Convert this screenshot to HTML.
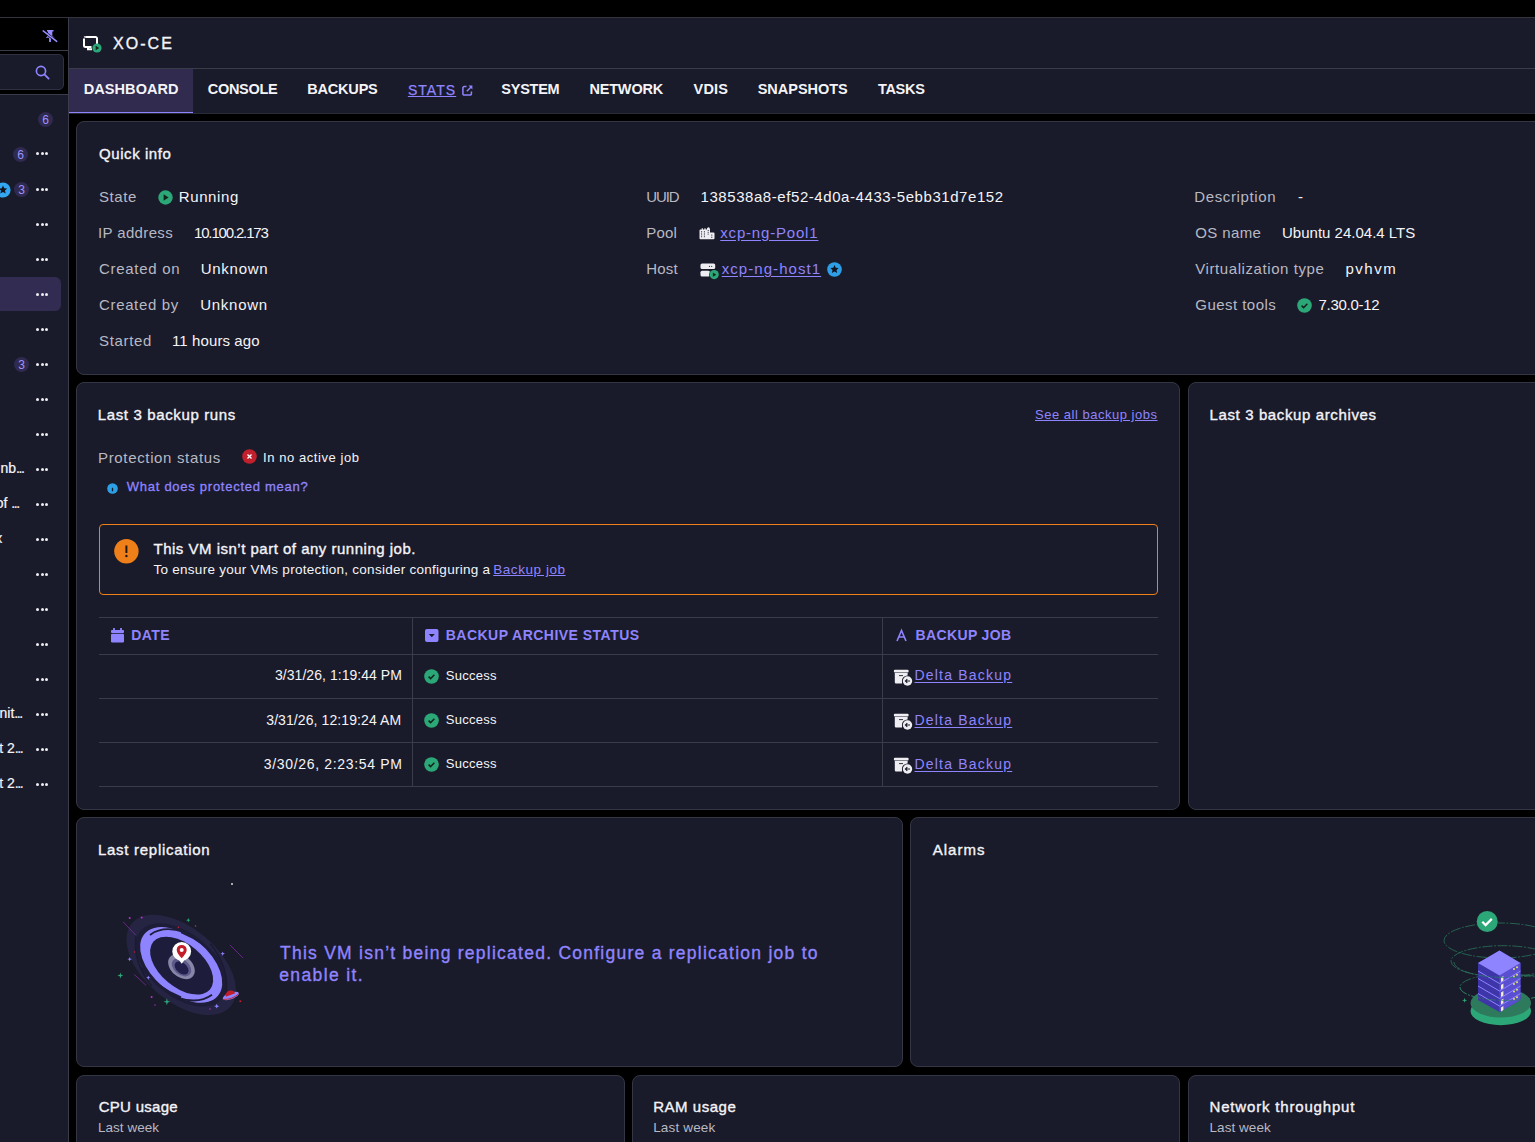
<!DOCTYPE html>
<html><head><meta charset="utf-8">
<style>
html,body{margin:0;padding:0;}
body{width:1535px;height:1142px;overflow:hidden;background:#000;position:relative;font-family:"Liberation Sans",sans-serif;}
.a{position:absolute;box-sizing:border-box;}
.t{position:absolute;white-space:nowrap;}
.card{position:absolute;box-sizing:border-box;background:#1a1b2a;border:1px solid #353645;border-radius:8px;}
.hl{position:absolute;height:1px;background:#3b3c4a;}
.vl{position:absolute;width:1px;background:#3b3c4a;}
svg{position:absolute;overflow:visible;}
.badge{position:absolute;width:15px;height:15px;border-radius:50%;background:#2f2a4f;color:#9d93ff;font-size:12px;line-height:16.5px;text-align:center;}
.dots{position:absolute;width:13px;height:3px;}
.dots i{position:absolute;top:0;width:3px;height:3px;border-radius:50%;background:#eeeef2;}
</style></head><body>
<!-- top border -->
<div class="hl" style="left:0;top:17px;width:1535px;background:#34343f"></div>
<!-- sidebar -->
<div class="a" style="left:0;top:18px;width:68px;height:1124px;background:#1a1b2a"></div>
<div class="a" style="left:0;top:18px;width:68px;height:32px;background:#000"></div>
<div class="hl" style="left:0;top:50px;width:68px"></div>
<div class="a" style="left:0;top:51px;width:68px;height:43px;background:#000"></div>
<div class="a" style="left:-20px;top:54px;width:84px;height:36px;background:#1a1b2a;border:1px solid #2f3040;border-radius:5px"></div>
<div class="hl" style="left:0;top:94px;width:68px"></div>
<div class="vl" style="left:68px;top:18px;height:1124px"></div>
<div class="a" style="left:-10px;top:277px;width:71px;height:34px;background:#322c52;border-radius:6px"></div>
<!-- pin icon -->
<svg style="left:40px;top:26px" width="20" height="18" viewBox="40 26 20 18">
  <path d="M47 30h6.5v1.6h-1.2v4.2l2.3 2h-8.9l2.3-2v-4.2H47z" fill="#968cff"/>
  <path d="M49.1 37.5h1.8v4.4h-1.8z" fill="#968cff"/>
  <path d="M42.5 30.3L57.3 41.9" stroke="#000" stroke-width="2.6"/>
  <path d="M43.2 30.9L56.7 41.4" stroke="#968cff" stroke-width="1.5" stroke-linecap="round"/>
</svg>
<!-- search icon -->
<svg style="left:35px;top:65px" width="15" height="15" viewBox="0 0 15 15">
  <circle cx="6" cy="6" r="4.6" fill="none" stroke="#8f84ff" stroke-width="1.6"/>
  <path d="M9.4 9.4l4.2 4.2" stroke="#8f84ff" stroke-width="1.8" stroke-linecap="round"/>
</svg>
<!-- sidebar badges -->
<div class="badge" style="left:38px;top:111.5px">6</div>
<div class="badge" style="left:13px;top:146.5px">6</div>
<div class="badge" style="left:14px;top:181.5px">3</div>
<div class="badge" style="left:14px;top:357px">3</div>
<svg style="left:-5px;top:181.5px" width="16" height="16" viewBox="0 0 16 16">
  <circle cx="8" cy="8" r="7.6" fill="#33a6f2"/>
  <path d="M8 3.6l1.25 2.7 2.9.3-2.15 2 .6 2.9L8 10.05 5.4 11.5l.6-2.9-2.15-2 2.9-.3z" fill="#14141e"/>
</svg>
<div class="dots" style="left:36px;top:151.5px"><i style="left:0"></i><i style="left:4.5px"></i><i style="left:9px"></i></div>
<div class="dots" style="left:36px;top:187.5px"><i style="left:0"></i><i style="left:4.5px"></i><i style="left:9px"></i></div>
<div class="dots" style="left:36px;top:222.5px"><i style="left:0"></i><i style="left:4.5px"></i><i style="left:9px"></i></div>
<div class="dots" style="left:36px;top:257.5px"><i style="left:0"></i><i style="left:4.5px"></i><i style="left:9px"></i></div>
<div class="dots" style="left:36px;top:292.5px"><i style="left:0"></i><i style="left:4.5px"></i><i style="left:9px"></i></div>
<div class="dots" style="left:36px;top:327.5px"><i style="left:0"></i><i style="left:4.5px"></i><i style="left:9px"></i></div>
<div class="dots" style="left:36px;top:362.5px"><i style="left:0"></i><i style="left:4.5px"></i><i style="left:9px"></i></div>
<div class="dots" style="left:36px;top:397.5px"><i style="left:0"></i><i style="left:4.5px"></i><i style="left:9px"></i></div>
<div class="dots" style="left:36px;top:432.5px"><i style="left:0"></i><i style="left:4.5px"></i><i style="left:9px"></i></div>
<div class="dots" style="left:36px;top:467.5px"><i style="left:0"></i><i style="left:4.5px"></i><i style="left:9px"></i></div>
<div class="dots" style="left:36px;top:502.5px"><i style="left:0"></i><i style="left:4.5px"></i><i style="left:9px"></i></div>
<div class="dots" style="left:36px;top:537.5px"><i style="left:0"></i><i style="left:4.5px"></i><i style="left:9px"></i></div>
<div class="dots" style="left:36px;top:572.5px"><i style="left:0"></i><i style="left:4.5px"></i><i style="left:9px"></i></div>
<div class="dots" style="left:36px;top:607.5px"><i style="left:0"></i><i style="left:4.5px"></i><i style="left:9px"></i></div>
<div class="dots" style="left:36px;top:642.5px"><i style="left:0"></i><i style="left:4.5px"></i><i style="left:9px"></i></div>
<div class="dots" style="left:36px;top:677.5px"><i style="left:0"></i><i style="left:4.5px"></i><i style="left:9px"></i></div>
<div class="dots" style="left:36px;top:712.5px"><i style="left:0"></i><i style="left:4.5px"></i><i style="left:9px"></i></div>
<div class="dots" style="left:36px;top:747.5px"><i style="left:0"></i><i style="left:4.5px"></i><i style="left:9px"></i></div>
<div class="dots" style="left:36px;top:782.5px"><i style="left:0"></i><i style="left:4.5px"></i><i style="left:9px"></i></div>
<!-- header -->
<div class="a" style="left:69px;top:18px;width:1466px;height:50px;background:#1a1b2a"></div>
<div class="hl" style="left:69px;top:68px;width:1466px"></div>
<svg style="left:83px;top:36px" width="19" height="17" viewBox="0 0 19 17">
  <path d="M2.5 1h10a1.5 1.5 0 0 1 1.5 1.5v5.5" fill="none" stroke="#fff" stroke-width="2"/>
  <path d="M1 2.5v7a1.5 1.5 0 0 0 1.5 1.5h6" fill="none" stroke="#fff" stroke-width="2"/>
  <path d="M1.5 1.5a1.2 1.2 0 0 1 1-.5" stroke="#fff" stroke-width="2"/>
  <path d="M5 11v2.3h4" fill="none" stroke="#fff" stroke-width="2"/>
  <circle cx="14" cy="12" r="4.6" fill="#2ca878"/>
  <path d="M12.7 9.8v4.4l3.5-2.2z" fill="#15261f"/>
</svg>
<!-- tabs -->
<div class="a" style="left:69px;top:69px;width:1466px;height:44px;background:#1a1b2a"></div>
<div class="a" style="left:69px;top:69px;width:124px;height:43px;background:#312b50"></div>
<div class="a" style="left:69px;top:112px;width:124px;height:1px;background:#8f84ff"></div>
<div class="hl" style="left:69px;top:113px;width:1466px;background:#2b2b36"></div>
<svg style="left:462px;top:85px" width="11" height="11" viewBox="0 0 11 11">
  <path d="M4.5 1.6H2.1A1.2 1.2 0 0 0 0.9 2.8v6.1A1.2 1.2 0 0 0 2.1 10.1h6.1A1.2 1.2 0 0 0 9.4 8.9V6.5" fill="none" stroke="#8f84ff" stroke-width="1.5"/>
  <path d="M6.5 0.6h3.9v3.9z" fill="#8f84ff"/><path d="M9.6 1.4L4.8 6.2" fill="none" stroke="#8f84ff" stroke-width="1.4"/>
</svg>

<!-- cards -->
<div class="card" style="left:76px;top:121px;width:1500px;height:254px"></div>
<div class="card" style="left:76px;top:382px;width:1104px;height:428px"></div>
<div class="card" style="left:1188px;top:382px;width:500px;height:428px"></div>
<div class="card" style="left:76px;top:817px;width:827px;height:250px"></div>
<div class="card" style="left:910px;top:817px;width:700px;height:250px"></div>
<div class="card" style="left:76px;top:1075px;width:549px;height:120px"></div>
<div class="card" style="left:632px;top:1075px;width:548px;height:120px"></div>
<div class="card" style="left:1188px;top:1075px;width:500px;height:120px"></div>

<!-- quick info icons -->
<svg style="left:157.5px;top:190px" width="15" height="15" viewBox="0 0 15 15">
  <circle cx="7.5" cy="7.5" r="7.2" fill="#2ca878"/>
  <path d="M5.6 4.3v6.4l5-3.2z" fill="#13241d"/>
</svg>
<svg style="left:698.5px;top:226.5px" width="16" height="13" viewBox="0 0 16 13">
  <path d="M0.5 3.5q0-1 1-1h1.2v-1.2h1.2v1.2h1.5v-1.2h1.2v1.2h1.2q0-2 1.5-2.2q1.7 0 1.7 2.2v3h3.5q1 0 1 1v4.8q0 1-1 1H1.5q-1 0-1-1z" fill="#eeeef2"/>
  <g stroke="#1a1b2a" stroke-width="0.9" stroke-dasharray="1.2 1">
   <path d="M2.6 4.2v6.8M5.4 4.2v6.8M9.2 3v5"/><path d="M12.8 7.5v3.6"/>
  </g>
</svg>
<svg style="left:699.5px;top:262.5px" width="20" height="17" viewBox="0 0 20 17">
  <rect x="0.5" y="0.5" width="14.7" height="5.5" rx="1.6" fill="#eeeef2"/>
  <rect x="0.5" y="7.7" width="9.5" height="5.8" rx="1.6" fill="#eeeef2"/>
  <circle cx="9.5" cy="3.3" r=".6" fill="#1a1b2a"/><circle cx="11.7" cy="3.3" r=".6" fill="#1a1b2a"/>
  <circle cx="14.2" cy="11.6" r="5.1" fill="#1a1b2a"/>
  <circle cx="14.2" cy="11.6" r="4.6" fill="#2ca878"/>
  <path d="M12.9 9.5v4.3l3.4-2.15z" fill="#13241d"/>
</svg>
<svg style="left:826.5px;top:261.75px" width="15" height="15" viewBox="0 0 15 15">
  <circle cx="7.5" cy="7.5" r="7.3" fill="#2c9fe7"/>
  <path d="M7.5 3.1l1.25 2.7 2.9.3-2.15 2 .6 2.9L7.5 9.55 4.9 11l.6-2.9-2.15-2 2.9-.3z" fill="#14141e"/>
</svg>
<svg style="left:1296.5px;top:297.5px" width="15" height="15" viewBox="0 0 15 15">
  <circle cx="7.5" cy="7.5" r="7.3" fill="#2ca878"/>
  <path d="M4.6 7.6l2 2 3.8-3.9" fill="none" stroke="#13241d" stroke-width="1.5"/>
</svg>
<!-- backup runs icons -->
<svg style="left:241.75px;top:448.75px" width="15" height="15" viewBox="0 0 15 15">
  <circle cx="7.5" cy="7.5" r="7.3" fill="#c0212c"/>
  <path d="M5.5 5.5l4 4M9.5 5.5l-4 4" stroke="#fff" stroke-width="1.3"/>
</svg>
<svg style="left:106.75px;top:482.75px" width="11" height="11" viewBox="0 0 11 11">
  <circle cx="5.5" cy="5.5" r="5.3" fill="#2c9fe7"/>
  <path d="M5.5 4.8v3.5" stroke="#13202c" stroke-width="1.3"/>
</svg>
<div class="a" style="left:99px;top:524px;width:1059px;height:71px;border:1px solid #ef7f18;border-radius:4px"></div>
<svg style="left:113.75px;top:538.75px" width="25" height="25" viewBox="0 0 25 25">
  <circle cx="12.4" cy="12.25" r="12.2" fill="#ef7f18"/>
  <path d="M12.4 6.5v7.5" stroke="#23180e" stroke-width="2"/>
  <circle cx="12.4" cy="17" r="1.2" fill="#23180e"/>
</svg>
<!-- table -->
<div class="hl" style="left:99px;top:617px;width:1059px"></div>
<div class="hl" style="left:99px;top:654px;width:1059px"></div>
<div class="hl" style="left:99px;top:698px;width:1059px"></div>
<div class="hl" style="left:99px;top:742px;width:1059px"></div>
<div class="hl" style="left:99px;top:786px;width:1059px"></div>
<div class="vl" style="left:412px;top:617px;height:170px"></div>
<div class="vl" style="left:882px;top:617px;height:170px"></div>
<svg style="left:110.75px;top:628px" width="13" height="15" viewBox="0 0 13 15">
  <path d="M3 0v2.5M10 0v2.5" stroke="#8f84ff" stroke-width="1.8"/>
  <rect x="0" y="2" width="13" height="3" rx="1" fill="#8f84ff"/>
  <rect x="0" y="5.8" width="13" height="8.7" rx="1.2" fill="#8f84ff"/>
</svg>
<svg style="left:424.5px;top:628.75px" width="14" height="13" viewBox="0 0 14 13">
  <rect x="0" y="0" width="13.5" height="13" rx="2" fill="#8f84ff"/>
  <path d="M3.8 5h6l-3 3.2z" fill="#1a1b2a"/>
</svg>
<svg style="left:895.75px;top:630px" width="12" height="11" viewBox="0 0 12 11">
  <path d="M1 11L5.5 0.5 10 11M2.7 7h5.6" fill="none" stroke="#8f84ff" stroke-width="1.6"/>
</svg>
<svg style="left:423.75px;top:668.75px" width="15" height="15" viewBox="0 0 15 15">
  <circle cx="7.5" cy="7.5" r="7.3" fill="#2ca878"/>
  <path d="M4.6 7.6l2 2 3.8-3.9" fill="none" stroke="#13241d" stroke-width="1.5"/>
</svg>
<svg style="left:423.75px;top:712.75px" width="15" height="15" viewBox="0 0 15 15">
  <circle cx="7.5" cy="7.5" r="7.3" fill="#2ca878"/>
  <path d="M4.6 7.6l2 2 3.8-3.9" fill="none" stroke="#13241d" stroke-width="1.5"/>
</svg>
<svg style="left:423.75px;top:756.75px" width="15" height="15" viewBox="0 0 15 15">
  <circle cx="7.5" cy="7.5" r="7.3" fill="#2ca878"/>
  <path d="M4.6 7.6l2 2 3.8-3.9" fill="none" stroke="#13241d" stroke-width="1.5"/>
</svg>
<svg style="left:0;top:-44px" width="1535" height="1142" viewBox="0 0 1535 1142">
  <rect x="893.9" y="713.7" width="14.7" height="2.8" rx="1" fill="#eeeef2"/>
  <path d="M894.8 716.9h12.8v3.5a5.8 5.8 0 0 0-5.5 7.1h-6.1a1.2 1.2 0 0 1-1.2-1.2z" fill="#eeeef2"/>
  <path d="M899 719.6h4" stroke="#1a1b2a" stroke-width="0.9"/>
  <circle cx="907.5" cy="725" r="5.6" fill="#1a1b2a"/>
  <circle cx="907.5" cy="725" r="4.7" fill="#eeeef2"/>
  <path d="M910 725h-4.6M907.3 723.2l-1.9 1.8 1.9 1.8" fill="none" stroke="#1a1b2a" stroke-width="1.1"/>
</svg>
<svg style="left:0;top:0px" width="1535" height="1142" viewBox="0 0 1535 1142">
  <rect x="893.9" y="713.7" width="14.7" height="2.8" rx="1" fill="#eeeef2"/>
  <path d="M894.8 716.9h12.8v3.5a5.8 5.8 0 0 0-5.5 7.1h-6.1a1.2 1.2 0 0 1-1.2-1.2z" fill="#eeeef2"/>
  <path d="M899 719.6h4" stroke="#1a1b2a" stroke-width="0.9"/>
  <circle cx="907.5" cy="725" r="5.6" fill="#1a1b2a"/>
  <circle cx="907.5" cy="725" r="4.7" fill="#eeeef2"/>
  <path d="M910 725h-4.6M907.3 723.2l-1.9 1.8 1.9 1.8" fill="none" stroke="#1a1b2a" stroke-width="1.1"/>
</svg>
<svg style="left:0;top:44px" width="1535" height="1142" viewBox="0 0 1535 1142">
  <rect x="893.9" y="713.7" width="14.7" height="2.8" rx="1" fill="#eeeef2"/>
  <path d="M894.8 716.9h12.8v3.5a5.8 5.8 0 0 0-5.5 7.1h-6.1a1.2 1.2 0 0 1-1.2-1.2z" fill="#eeeef2"/>
  <path d="M899 719.6h4" stroke="#1a1b2a" stroke-width="0.9"/>
  <circle cx="907.5" cy="725" r="5.6" fill="#1a1b2a"/>
  <circle cx="907.5" cy="725" r="4.7" fill="#eeeef2"/>
  <path d="M910 725h-4.6M907.3 723.2l-1.9 1.8 1.9 1.8" fill="none" stroke="#1a1b2a" stroke-width="1.1"/>
</svg>
<!-- illustrations -->
<svg style="left:0;top:0" width="1535" height="1142" viewBox="0 0 1535 1142">
 <g transform="rotate(40 181.2 964.9)">
  <ellipse cx="181.2" cy="964.9" rx="64.5" ry="36.8" fill="#262443"/>
  <ellipse cx="181.2" cy="964.9" rx="53" ry="31.5" fill="#1e1d37"/>
  <ellipse cx="181.2" cy="964.9" rx="48" ry="28.5" fill="#8f84ff"/>
  <ellipse cx="182" cy="965.2" rx="37" ry="21.5" fill="#1d1c3a"/>
  <path d="M160 940 q25 -8 50 -3" fill="none" stroke="#1d1c3a" stroke-width="2"/>
  <path d="M202 990 q-25 8 -50 3" fill="none" stroke="#1d1c3a" stroke-width="2"/>
  <path d="M138 962 q4 -16 24 -24" fill="none" stroke="#1d1c3a" stroke-width="1.8"/>
  <path d="M224 968 q-4 16 -24 24" fill="none" stroke="#1d1c3a" stroke-width="1.8"/>
  <path d="M128 972 q14 22 44 28" fill="none" stroke="#1a1a30" stroke-width="1.5"/>
  <path d="M234 958 q-14 -22 -44 -28" fill="none" stroke="#1a1a30" stroke-width="1.5"/>
  <ellipse cx="182.5" cy="966" rx="15" ry="10.5" fill="#8886a8"/>
  <ellipse cx="183" cy="966.5" rx="11" ry="7.5" fill="#5d5a8a"/>
  <ellipse cx="183.5" cy="967" rx="8" ry="5.2" fill="#221f4c"/>
 </g>
 <path d="M181.7 963.8 l-4 -5.5 h8z" fill="#fff"/>
 <circle cx="181.7" cy="951.4" r="9.4" fill="#fff"/>
 <path d="M181.7 958.2 c-2.5 -3 -5 -5.5 -5 -8.3 a5 5 0 0 1 10 0 c0 2.8 -2.5 5.3 -5 8.3z" fill="#c41d2a"/>
 <circle cx="181.7" cy="950" r="2" fill="#fff"/>
 <g transform="rotate(-20 230.5 995)">
  <ellipse cx="230.5" cy="996" rx="8.5" ry="3.3" fill="#8f84ff"/>
  <path d="M225.5 995 a5 4.5 0 0 1 10 0z" fill="#c41d2a"/>
  <path d="M222.5 996.8 q8 3 16 0" fill="none" stroke="#c41d2a" stroke-width="0.8"/>
 </g>
 <g fill="#2ca878">
  <path d="M120.4 972.5l.7 2.3 2.3.7-2.3.7-.7 2.3-.7-2.3-2.3-.7 2.3-.7z"/>
  <path d="M166.9 998.3l.8 2.7 2.7.8-2.7.8-.8 2.7-.8-2.7-2.7-.8 2.7-.8z"/>
  <path d="M188.3 918l.6 1.6 1.6.6-1.6.6-.6 1.6-.6-1.6-1.6-.6 1.6-.6z"/>
 </g>
 <g fill="#8f84ff">
  <path d="M148.3 975.5l.6 1.6 1.6.6-1.6.6-.6 1.6-.6-1.6-1.6-.6 1.6-.6z"/>
  <path d="M129.7 957l.6 1.6 1.6.6-1.6.6-.6 1.6-.6-1.6-1.6-.6 1.6-.6z"/>
  <path d="M222.7 951.5l.6 1.6 1.6.6-1.6.6-.6 1.6-.6-1.6-1.6-.6 1.6-.6z"/>
  <path d="M216.7 1003.8l.7 1.7 1.7.7-1.7.7-.7 1.7-.7-1.7-1.7-.7 1.7-.7z"/>
 </g>
 <g fill="#c02bd6">
  <circle cx="141.7" cy="917.5" r="1"/><circle cx="129.7" cy="918" r="1"/><circle cx="151.6" cy="996.9" r="1"/>
  <circle cx="195.5" cy="926" r=".7"/><circle cx="155" cy="1005" r=".7"/><circle cx="210" cy="1009" r=".7"/>
 </g>
 <g fill="#c41d2a"><circle cx="240.3" cy="1001.2" r="1"/><circle cx="178.4" cy="927.4" r=".8"/><circle cx="134.6" cy="952" r=".8"/></g>
 <g stroke="#7a2a9a" stroke-width=".8">
  <path d="M123.1 921.9L135.7 935M229.9 944.9L243 958M134.1 974.4L146.1 985.4"/>
 </g>
 <circle cx="232" cy="884" r="1" fill="#ddd"/>
</svg>
<svg style="left:0;top:0" width="1535" height="1142" viewBox="0 0 1535 1142">
 <g fill="none" stroke="#2a7f5f" stroke-width=".7" stroke-dasharray="10 1.5 2 1.5">
  <ellipse cx="1500" cy="940.5" rx="56" ry="17.5"/>
  <ellipse cx="1503" cy="961.2" rx="52" ry="15.5"/>
  <ellipse cx="1506" cy="987.2" rx="46" ry="13.2"/>
 </g>
 <ellipse cx="1500.8" cy="1011" rx="30.3" ry="14.2" fill="#2ca878"/>
 <ellipse cx="1500.8" cy="1003" rx="30.3" ry="14.5" fill="#2e7a5c"/>
 <g>
  <path d="M1478 963 l21.5 -12.5 l21 12.5 v37 l-21 12 l-21.5 -12z" fill="#3d35a8"/>
  <path d="M1499.5 975.5 l21 -12.5 v37 l-21 12z" fill="#5a4fd0"/>
  <path d="M1478 963 l21.5 -12.5 l21 12.5 l-21 12.5z" fill="#8f84ff"/>
  <g stroke="#8f84ff" stroke-width="1" fill="none">
   <path d="M1478 971 l21.5 12.5 l21 -12.5M1478 978.5 l21.5 12.5 l21 -12.5M1478 986 l21.5 12.5 l21 -12.5M1478 993.5 l21.5 12.5 l21 -12.5"/>
  </g>
  <g fill="#f3ecd0">
   <path d="M1501 977.5v4.5l2.4 -1.4v-4.5z"/><path d="M1501 985v4.5l2.4 -1.4v-4.5z"/><path d="M1501 992.5v4.5l2.4 -1.4v-4.5z"/><path d="M1501 1000v4.5l2.4 -1.4v-4.5z"/><path d="M1501 1007.5v4l2.4 -1.4v-4z"/>
  </g>
  <g fill="#e8e070">
   <circle cx="1514" cy="969" r="1"/><circle cx="1517" cy="967.3" r="1"/>
   <circle cx="1514" cy="976.5" r="1"/><circle cx="1517" cy="974.8" r="1"/>
   <circle cx="1514" cy="984" r="1"/><circle cx="1517" cy="982.3" r="1"/>
   <circle cx="1514" cy="991.5" r="1"/><circle cx="1517" cy="989.8" r="1"/>
   <circle cx="1514" cy="999" r="1"/><circle cx="1517" cy="997.3" r="1"/>
  </g>
 </g>
 <g fill="none" stroke="#2a7f5f" stroke-width=".7" stroke-dasharray="10 1.5 2 1.5">
  <path d="M1454 962 a52 15.5 0 0 0 104 0"/>
  <path d="M1460 987.2 a46 13.2 0 0 0 92 0"/>
 </g>
 <circle cx="1487.2" cy="921.5" r="10.5" fill="#2ca878"/>
 <path d="M1482.3 921.8l3.3 3.3 6.2 -6.2" fill="none" stroke="#fff" stroke-width="2.2"/>
 <path d="M1464.6 997.8l.6 1.9 1.9.6-1.9.6-.6 1.9-.6-1.9-1.9-.6 1.9-.6z" fill="#2ca878"/>
</svg>
<div class="t" style="left:113.00px;top:36.00px;font-size:16px;line-height:16px;font-weight:normal;color:#f4f4f8;letter-spacing:2.050px;-webkit-text-stroke:0.35px #f4f4f8;">XO-CE</div>
<div class="t" style="left:83.75px;top:82.00px;font-size:14.5px;line-height:14.5px;font-weight:bold;color:#f4f4f8;letter-spacing:0.071px;">DASHBOARD</div>
<div class="t" style="left:207.70px;top:82.00px;font-size:14.5px;line-height:14.5px;font-weight:bold;color:#f4f4f8;letter-spacing:-0.271px;">CONSOLE</div>
<div class="t" style="left:307.30px;top:82.00px;font-size:14.5px;line-height:14.5px;font-weight:bold;color:#f4f4f8;letter-spacing:-0.205px;">BACKUPS</div>
<div class="t" style="left:407.90px;top:83.00px;font-size:14px;line-height:14px;font-weight:normal;color:#8f84ff;letter-spacing:1.050px;text-decoration:underline;text-underline-offset:0.5px;-webkit-text-stroke:0.25px #8f84ff;">STATS</div>
<div class="t" style="left:501.30px;top:82.00px;font-size:14.5px;line-height:14.5px;font-weight:bold;color:#f4f4f8;letter-spacing:-0.249px;">SYSTEM</div>
<div class="t" style="left:589.40px;top:82.00px;font-size:14.5px;line-height:14.5px;font-weight:bold;color:#f4f4f8;letter-spacing:-0.173px;">NETWORK</div>
<div class="t" style="left:693.50px;top:82.00px;font-size:14.5px;line-height:14.5px;font-weight:bold;color:#f4f4f8;letter-spacing:0.210px;">VDIS</div>
<div class="t" style="left:757.70px;top:82.00px;font-size:14.5px;line-height:14.5px;font-weight:bold;color:#f4f4f8;letter-spacing:-0.021px;">SNAPSHOTS</div>
<div class="t" style="left:877.90px;top:82.00px;font-size:14.5px;line-height:14.5px;font-weight:bold;color:#f4f4f8;letter-spacing:-0.274px;">TASKS</div>
<div class="t" style="left:99.00px;top:146.00px;font-size:15px;line-height:15px;font-weight:normal;color:#f4f4f8;letter-spacing:0.572px;-webkit-text-stroke:0.35px #f4f4f8;">Quick info</div>
<div class="t" style="left:99.00px;top:189.00px;font-size:15px;line-height:15px;font-weight:normal;color:#b8b8c3;letter-spacing:0.579px;">State</div>
<div class="t" style="left:178.75px;top:189.00px;font-size:15px;line-height:15px;font-weight:normal;color:#f4f4f8;letter-spacing:0.619px;">Running</div>
<div class="t" style="left:98.00px;top:225.00px;font-size:15px;line-height:15px;font-weight:normal;color:#b8b8c3;letter-spacing:0.366px;">IP address</div>
<div class="t" style="left:194.00px;top:225.00px;font-size:15px;line-height:15px;font-weight:normal;color:#f4f4f8;letter-spacing:-1.158px;">10.100.2.173</div>
<div class="t" style="left:99.00px;top:261.00px;font-size:15px;line-height:15px;font-weight:normal;color:#b8b8c3;letter-spacing:0.708px;">Created on</div>
<div class="t" style="left:200.75px;top:261.00px;font-size:15px;line-height:15px;font-weight:normal;color:#f4f4f8;letter-spacing:0.718px;">Unknown</div>
<div class="t" style="left:99.00px;top:297.00px;font-size:15px;line-height:15px;font-weight:normal;color:#b8b8c3;letter-spacing:0.653px;">Created by</div>
<div class="t" style="left:200.25px;top:297.00px;font-size:15px;line-height:15px;font-weight:normal;color:#f4f4f8;letter-spacing:0.718px;">Unknown</div>
<div class="t" style="left:99.00px;top:333.00px;font-size:15px;line-height:15px;font-weight:normal;color:#b8b8c3;letter-spacing:0.663px;">Started</div>
<div class="t" style="left:172.00px;top:333.00px;font-size:15px;line-height:15px;font-weight:normal;color:#f4f4f8;letter-spacing:0.103px;">11 hours ago</div>
<div class="t" style="left:646.25px;top:189.00px;font-size:15px;line-height:15px;font-weight:normal;color:#b8b8c3;letter-spacing:-1.111px;">UUID</div>
<div class="t" style="left:700.50px;top:189.00px;font-size:15px;line-height:15px;font-weight:normal;color:#f4f4f8;letter-spacing:0.567px;">138538a8-ef52-4d0a-4433-5ebb31d7e152</div>
<div class="t" style="left:646.25px;top:225.00px;font-size:15px;line-height:15px;font-weight:normal;color:#b8b8c3;letter-spacing:0.187px;">Pool</div>
<div class="t" style="left:720.25px;top:225.00px;font-size:15px;line-height:15px;font-weight:normal;color:#8f84ff;letter-spacing:0.815px;text-decoration:underline;text-underline-offset:1.5px;">xcp-ng-Pool1</div>
<div class="t" style="left:646.25px;top:261.00px;font-size:15px;line-height:15px;font-weight:normal;color:#b8b8c3;letter-spacing:0.192px;">Host</div>
<div class="t" style="left:721.75px;top:261.00px;font-size:15px;line-height:15px;font-weight:normal;color:#8f84ff;letter-spacing:1.057px;text-decoration:underline;text-underline-offset:1.5px;">xcp-ng-host1</div>
<div class="t" style="left:1194.25px;top:189.00px;font-size:15px;line-height:15px;font-weight:normal;color:#b8b8c3;letter-spacing:0.631px;">Description</div>
<div class="t" style="left:1298.00px;top:189.00px;font-size:15px;line-height:15px;font-weight:normal;color:#f4f4f8;letter-spacing:0.000px;">-</div>
<div class="t" style="left:1195.25px;top:225.00px;font-size:15px;line-height:15px;font-weight:normal;color:#b8b8c3;letter-spacing:0.372px;">OS name</div>
<div class="t" style="left:1282.00px;top:225.00px;font-size:15px;line-height:15px;font-weight:normal;color:#f4f4f8;letter-spacing:0.006px;">Ubuntu 24.04.4 LTS</div>
<div class="t" style="left:1195.25px;top:261.00px;font-size:15px;line-height:15px;font-weight:normal;color:#b8b8c3;letter-spacing:0.582px;">Virtualization type</div>
<div class="t" style="left:1345.50px;top:261.00px;font-size:15px;line-height:15px;font-weight:normal;color:#f4f4f8;letter-spacing:1.516px;">pvhvm</div>
<div class="t" style="left:1195.25px;top:297.00px;font-size:15px;line-height:15px;font-weight:normal;color:#b8b8c3;letter-spacing:0.463px;">Guest tools</div>
<div class="t" style="left:1318.50px;top:297.00px;font-size:15px;line-height:15px;font-weight:normal;color:#f4f4f8;letter-spacing:-0.286px;">7.30.0-12</div>
<div class="t" style="left:97.75px;top:407.00px;font-size:15px;line-height:15px;font-weight:normal;color:#f4f4f8;letter-spacing:0.633px;-webkit-text-stroke:0.35px #f4f4f8;">Last 3 backup runs</div>
<div class="t" style="left:1035.00px;top:408.00px;font-size:13px;line-height:13px;font-weight:normal;color:#8f84ff;letter-spacing:0.514px;text-decoration:underline;text-underline-offset:1px;">See all backup jobs</div>
<div class="t" style="left:98.00px;top:450.00px;font-size:15px;line-height:15px;font-weight:normal;color:#b8b8c3;letter-spacing:0.658px;">Protection status</div>
<div class="t" style="left:263.00px;top:451.00px;font-size:13px;line-height:13px;font-weight:normal;color:#f4f4f8;letter-spacing:0.569px;">In no active job</div>
<div class="t" style="left:126.75px;top:480.00px;font-size:13px;line-height:13px;font-weight:normal;color:#8f84ff;letter-spacing:0.736px;-webkit-text-stroke:0.3px #8f84ff;">What does protected mean?</div>
<div class="t" style="left:153.50px;top:541.00px;font-size:15px;line-height:15px;font-weight:normal;color:#f4f4f8;letter-spacing:0.499px;-webkit-text-stroke:0.35px #f4f4f8;">This VM isn’t part of any running job.</div>
<div class="t" style="left:153.50px;top:563.00px;font-size:13.5px;line-height:13.5px;font-weight:normal;color:#f4f4f8;letter-spacing:0.266px;">To ensure your VMs protection, consider configuring a</div>
<div class="t" style="left:493.25px;top:563.00px;font-size:13.5px;line-height:13.5px;font-weight:normal;color:#8f84ff;letter-spacing:0.551px;text-decoration:underline;text-underline-offset:1px;">Backup job</div>
<div class="t" style="left:131.25px;top:628.00px;font-size:14px;line-height:14px;font-weight:bold;color:#8f84ff;letter-spacing:0.422px;">DATE</div>
<div class="t" style="left:445.75px;top:628.00px;font-size:14px;line-height:14px;font-weight:bold;color:#8f84ff;letter-spacing:0.475px;">BACKUP ARCHIVE STATUS</div>
<div class="t" style="left:915.50px;top:628.00px;font-size:14px;line-height:14px;font-weight:bold;color:#8f84ff;letter-spacing:0.366px;">BACKUP JOB</div>
<div class="t" style="left:275.00px;top:668.00px;font-size:14px;line-height:14px;font-weight:normal;color:#f4f4f8;letter-spacing:0.046px;">3/31/26, 1:19:44 PM</div>
<div class="t" style="left:266.25px;top:713.00px;font-size:14px;line-height:14px;font-weight:normal;color:#f4f4f8;letter-spacing:0.094px;">3/31/26, 12:19:24 AM</div>
<div class="t" style="left:263.75px;top:757.00px;font-size:14px;line-height:14px;font-weight:normal;color:#f4f4f8;letter-spacing:0.671px;">3/30/26, 2:23:54 PM</div>
<div class="t" style="left:445.75px;top:669.00px;font-size:13px;line-height:13px;font-weight:normal;color:#f4f4f8;letter-spacing:0.270px;">Success</div>
<div class="t" style="left:445.75px;top:713.00px;font-size:13px;line-height:13px;font-weight:normal;color:#f4f4f8;letter-spacing:0.270px;">Success</div>
<div class="t" style="left:445.75px;top:757.00px;font-size:13px;line-height:13px;font-weight:normal;color:#f4f4f8;letter-spacing:0.270px;">Success</div>
<div class="t" style="left:914.50px;top:668.00px;font-size:14px;line-height:14px;font-weight:normal;color:#8f84ff;letter-spacing:1.206px;text-decoration:underline;text-underline-offset:1.5px;">Delta Backup</div>
<div class="t" style="left:914.50px;top:713.00px;font-size:14px;line-height:14px;font-weight:normal;color:#8f84ff;letter-spacing:1.206px;text-decoration:underline;text-underline-offset:1.5px;">Delta Backup</div>
<div class="t" style="left:914.50px;top:757.00px;font-size:14px;line-height:14px;font-weight:normal;color:#8f84ff;letter-spacing:1.206px;text-decoration:underline;text-underline-offset:1.5px;">Delta Backup</div>
<div class="t" style="left:1209.50px;top:407.00px;font-size:15px;line-height:15px;font-weight:normal;color:#f4f4f8;letter-spacing:0.623px;-webkit-text-stroke:0.35px #f4f4f8;">Last 3 backup archives</div>
<div class="t" style="left:98.00px;top:842.00px;font-size:15px;line-height:15px;font-weight:normal;color:#f4f4f8;letter-spacing:0.713px;-webkit-text-stroke:0.35px #f4f4f8;">Last replication</div>
<div class="t" style="left:280.00px;top:945.00px;font-size:17.5px;line-height:17.5px;font-weight:normal;color:#8f84ff;letter-spacing:1.253px;-webkit-text-stroke:0.35px #8f84ff;">This VM isn’t being replicated. Configure a replication job to</div>
<div class="t" style="left:279.25px;top:967.00px;font-size:17.5px;line-height:17.5px;font-weight:normal;color:#8f84ff;letter-spacing:1.371px;-webkit-text-stroke:0.35px #8f84ff;">enable it.</div>
<div class="t" style="left:932.75px;top:842.00px;font-size:15px;line-height:15px;font-weight:normal;color:#f4f4f8;letter-spacing:1.016px;-webkit-text-stroke:0.35px #f4f4f8;">Alarms</div>
<div class="t" style="left:98.75px;top:1099.00px;font-size:15px;line-height:15px;font-weight:normal;color:#f4f4f8;letter-spacing:0.267px;-webkit-text-stroke:0.35px #f4f4f8;">CPU usage</div>
<div class="t" style="left:98.00px;top:1121.00px;font-size:13.5px;line-height:13.5px;font-weight:normal;color:#b8b8c3;letter-spacing:0.027px;">Last week</div>
<div class="t" style="left:653.20px;top:1099.00px;font-size:15px;line-height:15px;font-weight:normal;color:#f4f4f8;letter-spacing:0.534px;-webkit-text-stroke:0.35px #f4f4f8;">RAM usage</div>
<div class="t" style="left:653.20px;top:1121.00px;font-size:13.5px;line-height:13.5px;font-weight:normal;color:#b8b8c3;letter-spacing:0.158px;">Last week</div>
<div class="t" style="left:1209.50px;top:1099.00px;font-size:15px;line-height:15px;font-weight:normal;color:#f4f4f8;letter-spacing:0.824px;-webkit-text-stroke:0.35px #f4f4f8;">Network throughput</div>
<div class="t" style="left:1209.50px;top:1121.00px;font-size:13.5px;line-height:13.5px;font-weight:normal;color:#b8b8c3;letter-spacing:0.058px;">Last week</div>
<div class="t" style="right:1511.50px;top:461px;font-size:14px;line-height:14px;color:#f4f4f8;-webkit-text-stroke:0.2px #f4f4f8">Unb<span style="letter-spacing:-1.4px">...</span><span style="letter-spacing:0">​</span></div>
<div class="t" style="right:1516.30px;top:496px;font-size:14px;line-height:14px;color:#f4f4f8;-webkit-text-stroke:0.2px #f4f4f8">of <span style="letter-spacing:-1.4px">...</span><span style="letter-spacing:0">​</span></div>
<div class="t" style="right:1532.75px;top:530.5px;font-size:14px;line-height:14px;color:#f4f4f8;-webkit-text-stroke:0.2px #f4f4f8">Ox</div>
<div class="t" style="right:1513.20px;top:706px;font-size:14px;line-height:14px;color:#f4f4f8;-webkit-text-stroke:0.2px #f4f4f8">Unit<span style="letter-spacing:-1.4px">...</span><span style="letter-spacing:0">​</span></div>
<div class="t" style="right:1512.70px;top:741px;font-size:14px;line-height:14px;color:#f4f4f8;-webkit-text-stroke:0.2px #f4f4f8">Test 2<span style="letter-spacing:-1.4px">...</span><span style="letter-spacing:0">​</span></div>
<div class="t" style="right:1512.70px;top:776px;font-size:14px;line-height:14px;color:#f4f4f8;-webkit-text-stroke:0.2px #f4f4f8">Test 2<span style="letter-spacing:-1.4px">...</span><span style="letter-spacing:0">​</span></div>
</body></html>
